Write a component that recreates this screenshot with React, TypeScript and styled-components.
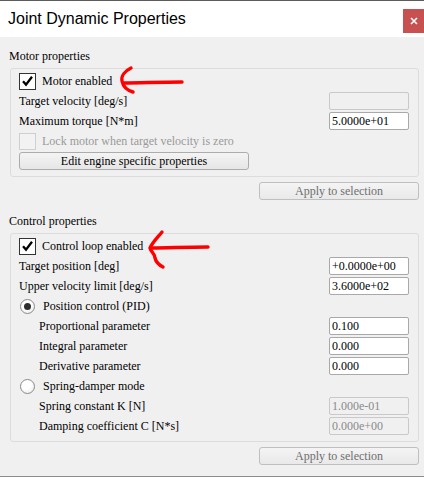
import React from 'react'
import styled, { createGlobalStyle } from "styled-components";

type FieldProps = {
  label: string;
  value: string;
  disabled?: boolean;
  indent?: boolean;
};

type CheckProps = {
  label: string;
  checked?: boolean;
  disabled?: boolean;
};

type RadioProps = {
  label: string;
  checked?: boolean;
};

const serif = `"Liberation Serif", "DejaVu Serif", "Times New Roman", serif`;

const FieldRow = ({ label, value, disabled, indent }: FieldProps) => (
  <Row $indent={indent}>
    <Label>{label}</Label>
    <ValueInput readOnly value={value} disabled={disabled} />
  </Row>
);

const CheckRow = ({ label, checked, disabled }: CheckProps) => (
  <Row>
    <ToggleLine $disabled={disabled}>
      <CheckBox $disabled={disabled}>
        {checked && (
          <svg width="13" height="12" viewBox="0 0 13 12">
            <path d="M2 6.2 L5 9.6 L11 1.8" fill="none" stroke="#000" strokeWidth="2.3" />
          </svg>
        )}
      </CheckBox>
      {label}
    </ToggleLine>
  </Row>
);

const RadioRow = ({ label, checked }: RadioProps) => (
  <Row>
    <ToggleLine>
      <Radio>{checked && <RadioDot />}</Radio>
      {label}
    </ToggleLine>
  </Row>
);

const Arrows = () => (
  <ArrowLayer width="424" height="477" viewBox="0 0 424 477">
    <g fill="none" stroke="#f00" strokeWidth="3.4" strokeLinecap="round" strokeLinejoin="round">
      <path d="M182 82 C160 82 140 83 124 83" />
      <path d="M131 68 C125 71 121 76 122 81 C123 86 126 90 133 92" />
      <path d="M208 247 C185 247 168 248 152 248" />
      <path d="M162 232 C157 238 152 243 150 248 C151 252 155 254 155 258 C156 262 159 265 163 267" />
    </g>
  </ArrowLayer>
);

const App = () => {
  return (
    <Window>
      <GlobalStyle />
      <TitleBar>
        <Title>Joint Dynamic Properties</Title>
        <CloseButton>
          <svg width="8" height="8" viewBox="0 0 8 8">
            <path d="M1 1 L7 7 M7 1 L1 7" stroke="#fff" strokeWidth="1.6" />
          </svg>
        </CloseButton>
      </TitleBar>

      <SectionHeading $top={9}>Motor properties</SectionHeading>
      <GroupBox>
        <CheckRow checked label="Motor enabled" />
        <FieldRow label="Target velocity [deg/s]" value="" disabled />
        <FieldRow label="Maximum torque [N*m]" value="5.0000e+01" />
        <CheckRow disabled label="Lock motor when target velocity is zero" />
        <Row>
          <WideButton>Edit engine specific properties</WideButton>
        </Row>
      </GroupBox>
      <ApplyBar>
        <ApplyButton disabled>Apply to selection</ApplyButton>
      </ApplyBar>

      <SectionHeading $top={11}>Control properties</SectionHeading>
      <GroupBox>
        <CheckRow checked label="Control loop enabled" />
        <FieldRow label="Target position [deg]" value="+0.0000e+00" />
        <FieldRow label="Upper velocity limit [deg/s]" value="3.6000e+02" />
        <RadioRow checked label="Position control (PID)" />
        <FieldRow indent label="Proportional parameter" value="0.100" />
        <FieldRow indent label="Integral parameter" value="0.000" />
        <FieldRow indent label="Derivative parameter" value="0.000" />
        <RadioRow label="Spring-damper mode" />
        <FieldRow indent label="Spring constant K [N]" value="1.000e-01" disabled />
        <FieldRow indent label="Damping coefficient C [N*s]" value="0.000e+00" disabled />
      </GroupBox>
      <ApplyBar>
        <ApplyButton disabled>Apply to selection</ApplyButton>
      </ApplyBar>

      <Arrows />
    </Window>
  );
};

export default App


const GlobalStyle = createGlobalStyle`
  body {
    margin: 0;
    background: #f0f0f0;
  }
`;

const Window = styled.div`
  position: relative;
  width: 424px;
  height: 477px;
  box-sizing: border-box;
  overflow: hidden;
  background: #f0f0f0;
  border-bottom: 1px solid #8c8c8c;
  font-family: ${serif};
  font-size: 12px;
  color: #000;
`;

const TitleBar = styled.div`
  height: 37px;
  box-sizing: border-box;
  border-top: 1px solid #5c5c5c;
  background: #fff;
  display: flex;
  justify-content: space-between;
  align-items: flex-start;
  padding-left: 8px;
`;

const Title = styled.div`
  font-family: "Liberation Sans", Arial, sans-serif;
  font-size: 16px;
  line-height: 36px;
  color: #000;
`;

const CloseButton = styled.div`
  width: 21px;
  height: 24px;
  margin-top: 8px;
  background: #c75050;
  display: flex;
  align-items: center;
  justify-content: center;
`;

const SectionHeading = styled.div<{ $top: number }>`
  height: 20px;
  line-height: 20px;
  padding-left: 9px;
  margin-top: ${(p) => p.$top}px;
`;

const GroupBox = styled.div`
  margin: 2px 5px 0 10px;
  border: 1px solid #dcdcdc;
  border-radius: 3px;
  padding: 2px 9px 5px 8px;
`;

const Row = styled.div<{ $indent?: boolean }>`
  height: 20px;
  display: grid;
  grid-template-columns: 1fr 80px;
  align-items: center;
  padding-left: ${(p) => (p.$indent ? "20px" : "0")};
`;

const Label = styled.span`
  white-space: nowrap;
`;

const ValueInput = styled.input`
  width: 80px;
  height: 18px;
  box-sizing: border-box;
  margin: 0;
  padding: 0 2px;
  border: 1px solid #a9a9a9;
  border-radius: 2px;
  background: #fff;
  font-family: ${serif};
  font-size: 12px;
  color: #000;
  outline: none;
  &:disabled {
    background: #f0f0f0;
    border-color: #c9c9c9;
    color: #8a8a8a;
  }
`;

const ToggleLine = styled.label<{ $disabled?: boolean }>`
  grid-column: 1 / -1;
  display: flex;
  align-items: center;
  gap: 6px;
  white-space: nowrap;
  color: ${(p) => (p.$disabled ? "#9a9a9a" : "#000")};
`;

const CheckBox = styled.span<{ $disabled?: boolean }>`
  width: 17px;
  height: 17px;
  box-sizing: border-box;
  border: 1px solid ${(p) => (p.$disabled ? "#cfcfcf" : "#333")};
  background: ${(p) => (p.$disabled ? "#f2f2f2" : "#fff")};
  display: flex;
  align-items: center;
  justify-content: center;
`;

const Radio = styled.span`
  width: 15px;
  height: 15px;
  margin: 0 2px 0 1px;
  box-sizing: border-box;
  border: 1px solid #8a8a8a;
  border-radius: 50%;
  background: radial-gradient(circle at 40% 35%, #fff 40%, #e4e4e4 100%);
  display: flex;
  align-items: center;
  justify-content: center;
`;

const RadioDot = styled.span`
  width: 7px;
  height: 7px;
  border-radius: 50%;
  background: #2e2e2e;
`;

const ButtonBase = styled.button`
  height: 18px;
  box-sizing: border-box;
  margin: 0;
  padding: 0;
  border-radius: 3px;
  font-family: ${serif};
  font-size: 12px;
  line-height: 16px;
  text-align: center;
  cursor: pointer;
`;

const WideButton = styled(ButtonBase)`
  grid-column: 1 / -1;
  width: 230px;
  border: 1px solid #acacac;
  background: linear-gradient(#f4f4f4, #e6e6e6);
  color: #000;
`;

const ApplyBar = styled.div`
  display: flex;
  justify-content: flex-end;
  margin: 5px 5px 0 0;
`;

const ApplyButton = styled(ButtonBase)`
  width: 160px;
  border: 1px solid #bfbfbf;
  background: linear-gradient(#f4f4f4, #e9e9e9);
  color: #6e6e6e;
  &:disabled {
    color: #6e6e6e;
  }
`;

const ArrowLayer = styled.svg`
  position: absolute;
  left: 0;
  top: 0;
  pointer-events: none;
`;
